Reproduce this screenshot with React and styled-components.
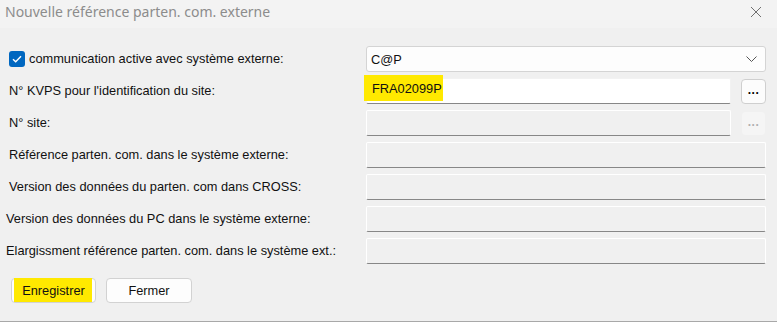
import React from "react";
import styled, { createGlobalStyle } from "styled-components";

const GlobalStyle = createGlobalStyle`
  html, body {
    margin: 0;
    padding: 0;
    background: #f0f0f0;
  }
  * {
    box-sizing: border-box;
  }
`;

const Window = styled.div`
  width: 777px;
  height: 322px;
  display: flex;
  flex-direction: column;
  background: #f0f0f0;
  font-family: "Liberation Sans", Arial, sans-serif;
  font-size: 12.8px;
  color: #111;
  border-bottom: 1px solid #a8a8a8;
  overflow: hidden;
`;

const TitleBar = styled.div`
  height: 28px;
  display: flex;
  align-items: center;
  justify-content: space-between;
  padding: 0 14px 5px 5px;
  background: #f3f3f3;
`;

const Title = styled.div`
  font-family: "Noto Sans", "Open Sans", sans-serif;
  font-size: 14px;
  color: #8c8c8c;
`;

const CloseButton = styled.div`
  width: 14px;
  height: 14px;
  display: flex;
  align-items: center;
  justify-content: center;
`;

const Form = styled.div`
  display: flex;
  flex-direction: column;
  gap: 6px;
  padding: 18px 11px 0 0;
`;

const Row = styled.div`
  display: grid;
  grid-template-columns: 366px 1fr;
  align-items: center;
  height: 26px;
`;

const Label = styled.div`
  display: flex;
  align-items: center;
  gap: 4px;
  padding-left: ${(p) => p.$indent ?? 9}px;
  padding-bottom: 1px;
  white-space: nowrap;
`;

const CheckBox = styled.div`
  width: 16px;
  height: 16px;
  border-radius: 3px;
  background: #0067c0;
  display: flex;
  align-items: center;
  justify-content: center;
`;

const FieldLine = styled.div`
  display: flex;
  align-items: center;
  gap: 10px;
  height: 26px;
`;

const Select = styled.div`
  flex: 1;
  height: 26px;
  display: flex;
  align-items: center;
  justify-content: space-between;
  padding: 0 8px 0 4px;
  background: #fdfdfd;
  border: 1px solid #d4d4d4;
  border-radius: 3px;
`;

const Input = styled.div`
  position: relative;
  flex: 1;
  height: 26px;
  display: flex;
  align-items: center;
  padding-left: 5px;
  background: ${(p) => (p.$disabled ? "#f0f0f0" : "#ffffff")};
  border: 1px solid ${(p) => (p.$disabled ? "#ffffff" : "#f2f2f2")};
  border-bottom: 1px solid #878787;
  border-radius: 2px;
`;

const Highlight = styled.span`
  position: absolute;
  left: -3px;
  top: -4px;
  width: 79px;
  height: 26px;
  background: #ffe900;
  display: flex;
  align-items: center;
  padding-left: 8px;
`;

const DotsButton = styled.div`
  width: 25px;
  height: 25px;
  display: flex;
  align-items: center;
  justify-content: center;
  border-radius: 4px;
  border: 1px solid ${(p) => (p.$disabled ? "#f0f0f0" : "#cfcfcf")};
  background: ${(p) => (p.$disabled ? "#f5f5f5" : "#fcfcfc")};
  color: ${(p) => (p.$disabled ? "#b0b0b0" : "#000")};
  font-weight: bold;
  font-size: 12px;
  letter-spacing: 0.5px;
  padding-bottom: 2px;
`;

const Footer = styled.div`
  display: flex;
  gap: 10px;
  padding: 14px 0 0 11px;
`;

const Button = styled.div`
  position: relative;
  width: ${(p) => p.$width}px;
  height: 25px;
  display: flex;
  align-items: center;
  justify-content: center;
  background: #fdfdfd;
  border: 1px solid #d2d2d2;
  border-radius: 4px;
  color: #111;
`;

const ButtonHighlight = styled.span`
  position: absolute;
  left: 2px;
  top: -1px;
  right: 3px;
  bottom: 0;
  background: #ffe900;
`;

const ButtonText = styled.span`
  position: relative;
`;

const fields = [
  { label: "Référence parten. com. dans le système externe:", indent: 9 },
  { label: "Version des données du parten. com dans CROSS:", indent: 9 },
  { label: "Version des données du PC dans le système externe:", indent: 6 },
  { label: "Elargissment référence parten. com. dans le système ext.:", indent: 6 },
];

function App() {
  return (
    <Window>
      <GlobalStyle />
      <TitleBar>
        <Title>Nouvelle référence parten. com. externe</Title>
        <CloseButton>
          <svg width="12" height="12" viewBox="0 0 12 12">
            <path d="M1 1L11 11M11 1L1 11" stroke="#707070" strokeWidth="1" />
          </svg>
        </CloseButton>
      </TitleBar>
      <Form>
        <Row>
          <Label $indent={9}>
            <CheckBox>
              <svg width="10" height="8" viewBox="0 0 10 8">
                <path d="M1 4.2L3.7 6.8L9 1.2" stroke="#fff" strokeWidth="1.4" fill="none" />
              </svg>
            </CheckBox>
            communication active avec système externe:
          </Label>
          <Select>
            C@P
            <svg width="11" height="6" viewBox="0 0 11 6">
              <path d="M0.5 0.5L5.5 5.5L10.5 0.5" stroke="#555" strokeWidth="1" fill="none" />
            </svg>
          </Select>
        </Row>
        <Row>
          <Label>N° KVPS pour l'identification du site:</Label>
          <FieldLine>
            <Input>
              <Highlight>FRA02099P</Highlight>
            </Input>
            <DotsButton>...</DotsButton>
          </FieldLine>
        </Row>
        <Row>
          <Label>N° site:</Label>
          <FieldLine>
            <Input $disabled />
            <DotsButton $disabled>...</DotsButton>
          </FieldLine>
        </Row>
        {fields.map((f) => (
          <Row key={f.label}>
            <Label $indent={f.indent}>{f.label}</Label>
            <FieldLine>
              <Input $disabled />
            </FieldLine>
          </Row>
        ))}
      </Form>
      <Footer>
        <Button $width={85}>
          <ButtonHighlight />
          <ButtonText>Enregistrer</ButtonText>
        </Button>
        <Button $width={86}>Fermer</Button>
      </Footer>
    </Window>
  );
}

export default App;
